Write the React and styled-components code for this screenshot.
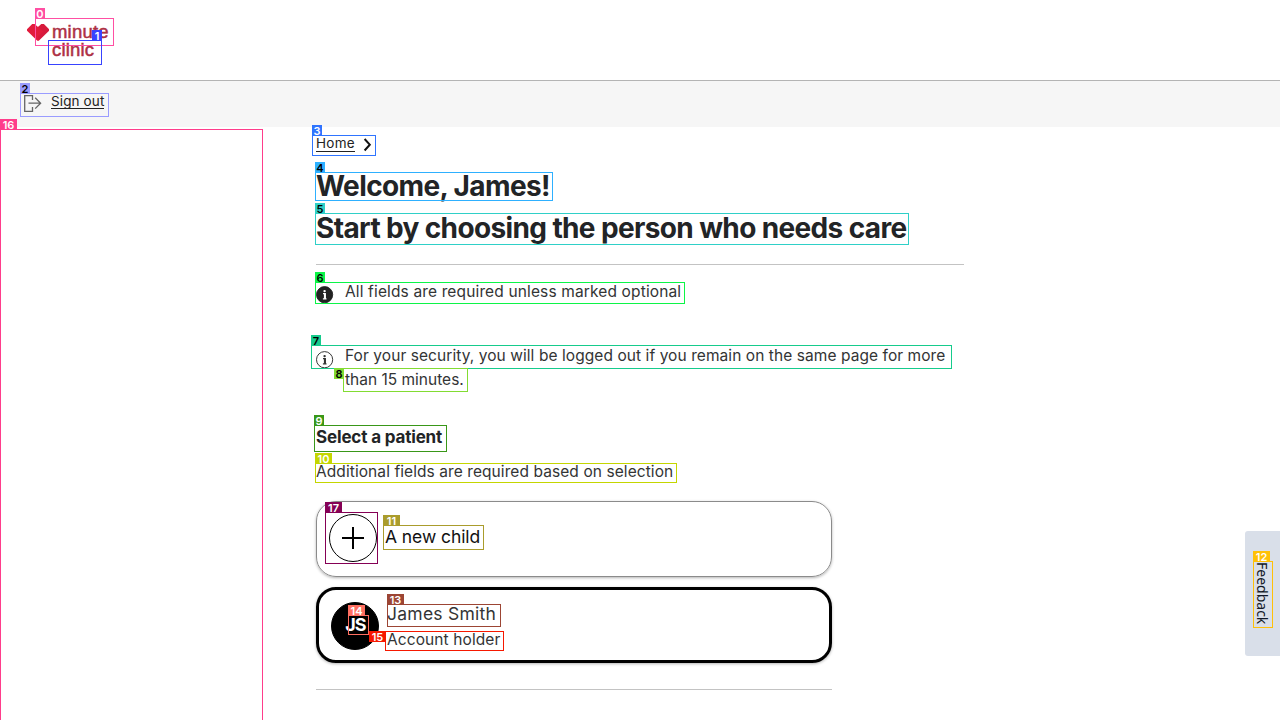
import React from "react";
import styled, { createGlobalStyle } from "styled-components";

const GlobalStyle = createGlobalStyle`
  * { box-sizing: border-box; }
  html, body { margin: 0; height: 100%; overflow: hidden; background: #fff; }
  body { font-family: Inter, "Liberation Sans", sans-serif; color: #333435; }
  h1, h2, p { margin: 0; }
`;

const Page = styled.div`
  position: relative;
  width: 1280px;
  height: 720px;
  overflow: hidden;
`;

const Header = styled.header`
  height: 81px;
  padding: 21px 0 0 27px;
  display: flex;
  gap: 3px;
  border-bottom: 1px solid #b4b4b4;
`;

const Wordmark = styled.div`
  margin-top: 2px;
  font-family: "Liberation Sans", sans-serif;
  font-size: 18.5px;
  line-height: 18px;
  letter-spacing: 0.2px;
  color: #ad3045;
  -webkit-text-stroke: 0.5px #ad3045;
  display: flex;
  flex-direction: column;
`;

const HeartIcon = styled.svg`
  display: block;
  margin-top: 2px;
  flex: none;
`;

const AccountBar = styled.nav`
  height: 46px;
  padding: 10px 24px;
  display: flex;
  align-items: flex-start;
  gap: 9px;
  background: #f6f6f6;
  svg { margin-top: 3px; }
`;

const TextLink = styled.a`
  height: ${(p) => p.$height || 18}px;
  font-size: 13.5px;
  line-height: 20px;
  letter-spacing: ${(p) => p.$spacing}px;
  color: #222;
  border-bottom: 1px solid #222;
`;

const Main = styled.main`
  width: 964px;
  padding: 6px 0 0 316px;
`;

const Breadcrumb = styled.nav`
  display: flex;
  height: 20px;
  gap: 8px;
  svg { margin-top: 5px; }
`;

const Title = styled.h1`
  margin-top: 12px;
  display: flex;
  flex-direction: column;
  font-size: 28px;
  font-weight: 650;
  line-height: 42px;
  color: #222426;
  white-space: nowrap;
`;

const Line = styled.span`
  letter-spacing: ${(p) => p.$spacing}px;
  white-space: nowrap;
`;

const Divider = styled.div`
  width: ${(p) => p.$width}px;
  height: 1px;
  margin-top: ${(p) => p.$top}px;
  background: #c3c3c3;
`;

const Notice = styled.div`
  display: flex;
  gap: 11px;
  margin-top: ${(p) => p.$top}px;
  font-size: 15.5px;
  line-height: 24px;
  svg { margin-top: ${(p) => p.$iconTop}px; flex: none; }
`;

const NoticeText = styled.p`
  display: flex;
  flex-direction: column;
`;

const SectionTitle = styled.h2`
  margin-top: 33px;
  font-size: 17px;
  font-weight: 650;
  line-height: 24px;
  letter-spacing: -0.16px;
  color: #222426;
`;

const Hint = styled.p`
  margin-top: 11px;
  font-size: 15.5px;
  line-height: 24px;
  letter-spacing: 0.08px;
`;

const Cards = styled.div`
  margin-top: 17px;
  display: flex;
  flex-direction: column;
  gap: 10px;
`;

const Card = styled.div`
  width: 516px;
  height: 76px;
  padding: 12px;
  display: flex;
  gap: 8px;
  border: ${(p) => (p.$selected ? "3px solid #000" : "1px solid #8b8b8b")};
  border-radius: 20px;
  box-shadow: 0 1px 3px rgba(0, 0, 0, 0.3);
`;

const Avatar = styled.div`
  width: 48px;
  height: 48px;
  flex: none;
  border-radius: 50%;
  display: flex;
  align-items: center;
  justify-content: center;
  border: 1px solid #000;
  background: ${(p) => (p.$filled ? "#000" : "#fff")};
  color: #fff;
  font-size: 18px;
  font-weight: 650;
  letter-spacing: -0.9px;
`;

const Initials = styled.span`
  padding: 0 0 4px 1px;
`;

const CardText = styled.div`
  display: flex;
  flex-direction: column;
  gap: 2px;
  padding-top: ${(p) => p.$top}px;
`;

const Name = styled.span`
  font-size: 17.5px;
  line-height: ${(p) => p.$line}px;
  letter-spacing: ${(p) => p.$spacing}px;
  color: ${(p) => p.$color || "#333435"};
`;

const Role = styled.span`
  font-size: 15.5px;
  line-height: 24px;
  letter-spacing: 0.1px;
`;

const FeedbackTab = styled.button`
  position: absolute;
  right: 0;
  top: 531px;
  width: 35px;
  height: 125px;
  padding: 0;
  border: 0;
  border-radius: 3px 0 0 3px;
  background: #d9dfe9;
  color: #111827;
  font: 14px/35px "Noto Sans", sans-serif;
  writing-mode: vertical-rl;
  text-align: center;
`;

const Mark = styled.div`
  position: absolute;
  left: ${(p) => p.$x}px;
  top: ${(p) => p.$y}px;
  width: ${(p) => p.$w}px;
  height: ${(p) => p.$h}px;
  border: 1px solid ${(p) => p.$color};
  pointer-events: none;
`;

const MarkTag = styled.span`
  position: absolute;
  left: ${(p) => p.$dx}px;
  top: ${(p) => p.$dy}px;
  width: ${(p) => (p.$wide ? 17 : 10)}px;
  height: 11px;
  background: ${(p) => p.$color};
  color: ${(p) => p.$ink};
  font: 600 11px/12px Inter, sans-serif;
  text-align: center;
`;

// id, left, top, width, height, colour, label colour, label offset from the frame
const marks = [
  [0, 35, 18, 79, 28, "#ff4fa3", "#fff", -1, -11],
  [1, 48, 40, 54, 25, "#3843ff", "#fff", 43, -11],
  [2, 20, 93, 89, 24, "#9a9cff", "#000", -1, -11],
  [3, 312, 135, 64, 21, "#2f74ff", "#fff", -1, -11],
  [4, 315, 172, 238, 29, "#2eb0ff", "#000", -1, -11],
  [5, 315, 213, 594, 32, "#2fd0c8", "#000", -1, -11],
  [6, 315, 282, 370, 22, "#0cf548", "#000", -1, -11],
  [7, 311, 345, 641, 24, "#16cb8c", "#000", -1, -11],
  [8, 343, 368, 125, 24, "#82dc32", "#000", -10, -1],
  [9, 314, 425, 133, 27, "#399718", "#fff", -1, -11],
  [10, 315, 463, 362, 20, "#c4d600", "#fff", -1, -11],
  [11, 383, 525, 101, 25, "#aa9c2c", "#fff", -1, -11],
  [12, 1253, 561, 20, 67, "#ffc107", "#fff", -1, -11],
  [13, 387, 604, 114, 23, "#9c4534", "#fff", -1, -11],
  [14, 348, 615, 21, 20, "#ff6f61", "#fff", -1, -11],
  [15, 385, 631, 119, 20, "#f61800", "#fff", -17, -1],
  [16, 0, 129, 263, 610, "#ff3d8b", "#fff", -1, -11],
  [17, 325, 512, 53, 52, "#850055", "#fff", -1, -11],
];

function InfoIcon({ filled }) {
  const ink = filled ? "#fff" : "#333";
  return (
    <svg width="18" height="18" viewBox="0 0 18 18">
      <circle cx="8.6" cy="8.7" r="8.1" fill={filled ? "#222" : "#fff"} stroke="#222" strokeWidth="0.9" />
      <circle cx="8.6" cy="5.1" r="1.2" fill={ink} />
      <path d="M7 7.6h2.3v5.1M6.9 12.8h3.6" fill="none" stroke={ink} strokeWidth="1.2" />
      <path d="M8.8 7.4v5.4" stroke={ink} strokeWidth="1.8" />
    </svg>
  );
}

export default function App() {
  return (
    <Page>
      <GlobalStyle />
      <Header>
        <HeartIcon width="22" height="19" viewBox="0 0 22 19">
          <path d="M5.2 1h2.4L11 4.1 14.4 1h2.4L22 6.3v1.5L11.7 17.7h-1.4L0 7.8V6.3z" fill="#e21b3c" />
          <path d="M11 4.1 16.5 8.4 11 13.2 11.7 17.7 22 7.8V6.3L16.8 1h-2.4z" fill="#c9183b" opacity="0.4" />
        </HeartIcon>
        <Wordmark>
          <span>minute</span>
          <span>clinic</span>
        </Wordmark>
      </Header>
      <AccountBar>
        <svg width="18" height="19" viewBox="0 0 18 19" fill="none" stroke="#666" strokeWidth="1.3">
          <path d="M8.5 6V1.6H.7v15.8h7.8V13" />
          <path d="M4.5 9.2h12M11.2 3.8l5.4 5.4-5.4 5.4" />
        </svg>
        <TextLink $spacing={0.12}>Sign out</TextLink>
      </AccountBar>
      <Main>
        <Breadcrumb>
          <TextLink $spacing={0.25} $height={19}>Home</TextLink>
          <svg width="9" height="14" viewBox="0 0 9 14" fill="none" stroke="#111" strokeWidth="2">
            <path d="M1.6 1 6.8 6.7 1.6 12.5" />
          </svg>
        </Breadcrumb>
        <Title>
          <Line $spacing={-0.6}>Welcome, James!</Line>
          <Line $spacing={-0.63}>Start by choosing the person who needs care</Line>
        </Title>
        <Divider $width={648} $top={15} />
        <Notice $top={15} $iconTop={6}>
          <InfoIcon filled />
          <NoticeText>
            <Line $spacing={0.14}>All fields are required unless marked optional</Line>
          </NoticeText>
        </Notice>
        <Notice $top={40} $iconTop={7}>
          <InfoIcon />
          <NoticeText>
            <Line $spacing={0.07}>
              For your security, you will be logged out if you remain on the same page for more
            </Line>
            <Line $spacing={0}>than 15 minutes.</Line>
          </NoticeText>
        </Notice>
        <SectionTitle>Select a patient</SectionTitle>
        <Hint>Additional fields are required based on selection</Hint>
        <Cards>
          <Card>
            <Avatar>
              <svg width="24" height="24" viewBox="0 0 24 24" stroke="#000" strokeWidth="2">
                <path d="M12 1v22M1 12h22" />
              </svg>
            </Avatar>
            <CardText $top={10}>
              <Name $spacing={-0.08} $line={26} $color="#111">A new child</Name>
            </CardText>
          </Card>
          <Card $selected>
            <Avatar $filled>
              <Initials>JS</Initials>
            </Avatar>
            <CardText $top={0}>
              <Name $spacing={0.25} $line={24}>James Smith</Name>
              <Role>Account holder</Role>
            </CardText>
          </Card>
        </Cards>
        <Divider $width={516} $top={26} />
      </Main>
      <FeedbackTab>Feedback</FeedbackTab>
      {marks.map(([id, x, y, w, h, color, ink, dx, dy]) => (
        <Mark key={id} $x={x} $y={y} $w={w} $h={h} $color={color}>
          <MarkTag $dx={dx} $dy={dy} $wide={id > 9} $color={color} $ink={ink}>
            {id}
          </MarkTag>
        </Mark>
      ))}
    </Page>
  );
}
